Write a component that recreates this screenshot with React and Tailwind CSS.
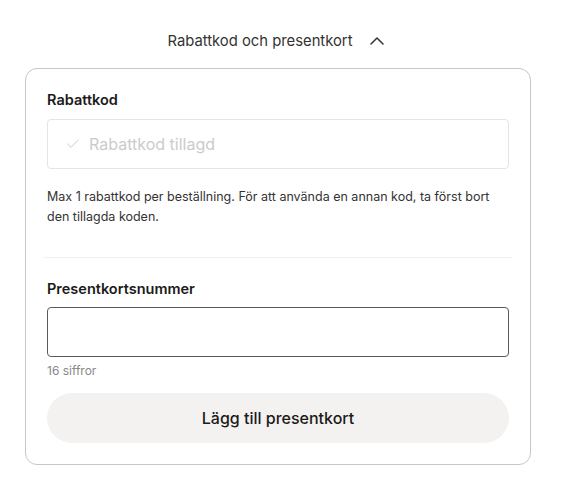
import { Check, ChevronUp } from "lucide-react";

export default function App() {
  return (
    <div className="min-h-[495px] w-[570px] bg-white font-['Inter','Liberation_Sans',sans-serif] text-[#1c1a19]">
      <div className="flex items-center justify-center gap-[12px] pt-[29px] pr-[14px]">
        <span className="text-[14.8px] leading-[20px] text-[#333]">Rabattkod och presentkort</span>
        <ChevronUp className="h-[24px] w-[24px] text-[#333]" strokeWidth={1.5} />
      </div>

      <div className="mx-[25px] mt-[15px] w-[506px] rounded-[12px] border border-[#c9c7c5] px-[21px] pt-[21px] pb-[21px]">
        <p className="text-[14.5px] font-semibold leading-[20px]">Rabattkod</p>
        <div className="mt-[9px] flex h-[50px] items-center gap-[8px] rounded-[4px] border border-[#e6e5e4] px-[17px]">
          <Check className="h-[16px] w-[16px] text-[#cbcbcb]" strokeWidth={1.5} />
          <span className="text-[16px] text-[#cbcbcb]">Rabattkod tillagd</span>
        </div>
        <p className="mt-[18px] text-[12.5px] leading-[20px] text-[#333]">
          Max 1 rabattkod per beställning. För att använda en annan kod, ta först bort
          <br />
          den tillagda koden.
        </p>

        <div className="-mx-[4px] mt-[30px] h-px bg-[#f7f0eb]" />

        <p className="mt-[21px] text-[14.5px] font-semibold leading-[20px]">Presentkortsnummer</p>
        <input
          className="mt-[8px] block h-[50px] w-full rounded-[4px] border-[1.5px] border-[#5c5a58] bg-white px-[14px] text-[16px] outline-none"
          type="text"
        />
        <p className="mt-[6px] text-[12px] leading-[16px] text-[#8a8887]">16 siffror</p>
        <button className="mt-[14px] flex h-[50px] w-full items-center justify-center rounded-full bg-[#f4f2f0] text-[16px] font-medium text-[#1c1a19]">
          Lägg till presentkort
        </button>
      </div>
    </div>
  );
}
